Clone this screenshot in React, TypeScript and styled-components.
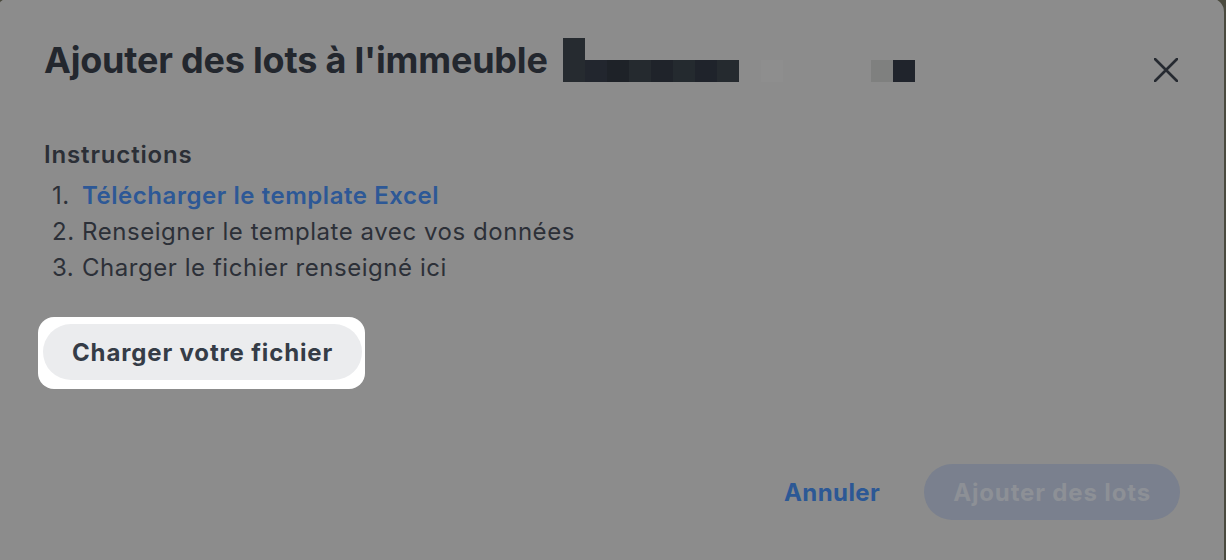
import React from "react";
import styled, { createGlobalStyle } from "styled-components";

const Global = createGlobalStyle`
  html, body { margin: 0; padding: 0; }
  body {
    background: #4a4a3e;
    font-family: Inter, "Noto Sans", sans-serif;
    -webkit-font-smoothing: antialiased;
  }
`;

const Viewport = styled.div`
  width: 1226px;
  height: 560px;
  overflow: hidden;
  background: #4a4a3e;
`;

const Modal = styled.div`
  box-sizing: border-box;
  margin: -2px 0 0 -4px;
  width: 1228px;
  height: 600px;
  background: #8c8c8c;
  border-radius: 14px;
  padding: 40px 44px 0 48px;
  display: flex;
  flex-direction: column;
`;

const Header = styled.div`
  display: flex;
  align-items: center;
  height: 44px;
`;

const Title = styled.h1`
  margin: 0;
  font-size: 36px;
  line-height: 44px;
  font-weight: 700;
  color: #23272e;
  letter-spacing: -0.2px;
  white-space: nowrap;
`;

const Redaction = styled.svg`
  display: block;
  margin-left: 15px;
  flex: none;
`;

const CloseButton = styled.button`
  margin-left: auto;
  margin-right: 2px;
  align-self: flex-start;
  margin-top: 20px;
  padding: 0;
  border: 0;
  background: transparent;
  display: flex;
  cursor: pointer;
`;

const SectionTitle = styled.h2`
  margin: 59px 0 0;
  font-size: 24px;
  line-height: 28px;
  font-weight: 600;
  letter-spacing: 0.85px;
  color: #2b2f36;
`;

const Steps = styled.ol`
  margin: 9px 0 0;
  padding: 0 0 0 8px;
  list-style: none;
  display: flex;
  flex-direction: column;
`;

const Step = styled.li`
  display: flex;
  font-size: 24px;
  line-height: 36px;
  letter-spacing: 0.55px;
  color: #2c3038;
`;

const StepNum = styled.span`
  width: 30px;
  flex: none;
`;

const StepLink = styled.a`
  color: #2d5896;
  font-weight: 600;
  text-decoration: none;
`;

const Spotlight = styled.div`
  align-self: flex-start;
  margin: 31px 0 0 -6px;
  padding: 7px 3px 9px 5px;
  background: #ffffff;
  border-radius: 16px;
`;

const Button = styled.button<{ $variant?: "light" | "disabled" }>`
  height: 56px;
  border: 0;
  border-radius: 28px;
  padding: 0 29px;
  font-family: Inter, "Noto Sans", sans-serif;
  font-size: 24px;
  font-weight: 700;
  letter-spacing: 0.85px;
  background: ${(p) => (p.$variant === "disabled" ? "#7a808e" : "#ebecee")};
  color: ${(p) => (p.$variant === "disabled" ? "#8d9096" : "#353c47")};
  cursor: pointer;
`;

const Footer = styled.div`
  margin-top: 75px;
  display: flex;
  justify-content: flex-end;
  align-items: center;
  gap: 44px;
`;

const TextButton = styled.button`
  border: 0;
  background: transparent;
  padding: 0;
  font-family: Inter, "Noto Sans", sans-serif;
  font-size: 24px;
  font-weight: 700;
  letter-spacing: 0.4px;
  color: #2c5895;
  cursor: pointer;
`;

const darkRow = ["#22262e", "#1e2228", "#252a2f", "#1f232a", "#242a2f", "#1f232b", "#252a2f"];

export default function App() {
  return (
    <>
      <Global />
      <Viewport>
        <Modal>
          <Header>
            <Title>Ajouter des lots à l'immeuble</Title>
            <Redaction width="352" height="44" viewBox="0 0 352 44">
              <rect x="0" y="0" width="22" height="44" fill="#262b30" />
              {darkRow.map((c, i) => (
                <rect key={i} x={22 * (i + 1)} y="22" width="22" height="22" fill={c} />
              ))}
              <rect x="198" y="22" width="22" height="22" fill="#8e8e8e" />
              <rect x="308" y="22" width="22" height="22" fill="#7f807f" />
              <rect x="330" y="22" width="22" height="22" fill="#20242c" />
            </Redaction>
            <CloseButton aria-label="Fermer">
              <svg width="24" height="24" viewBox="0 0 24 24">
                <path d="M1 1 L23 23 M23 1 L1 23" stroke="#262a31" strokeWidth="2.6" strokeLinecap="round" fill="none" />
              </svg>
            </CloseButton>
          </Header>
          <SectionTitle>Instructions</SectionTitle>
          <Steps>
            <Step>
              <StepNum>1.</StepNum>
              <StepLink href="#">Télécharger le template Excel</StepLink>
            </Step>
            <Step>
              <StepNum>2.</StepNum>
              <span>Renseigner le template avec vos données</span>
            </Step>
            <Step>
              <StepNum>3.</StepNum>
              <span>Charger le fichier renseigné ici</span>
            </Step>
          </Steps>
          <Spotlight>
            <Button>Charger votre fichier</Button>
          </Spotlight>
          <Footer>
            <TextButton>Annuler</TextButton>
            <Button $variant="disabled" disabled>
              Ajouter des lots
            </Button>
          </Footer>
        </Modal>
      </Viewport>
    </>
  );
}
